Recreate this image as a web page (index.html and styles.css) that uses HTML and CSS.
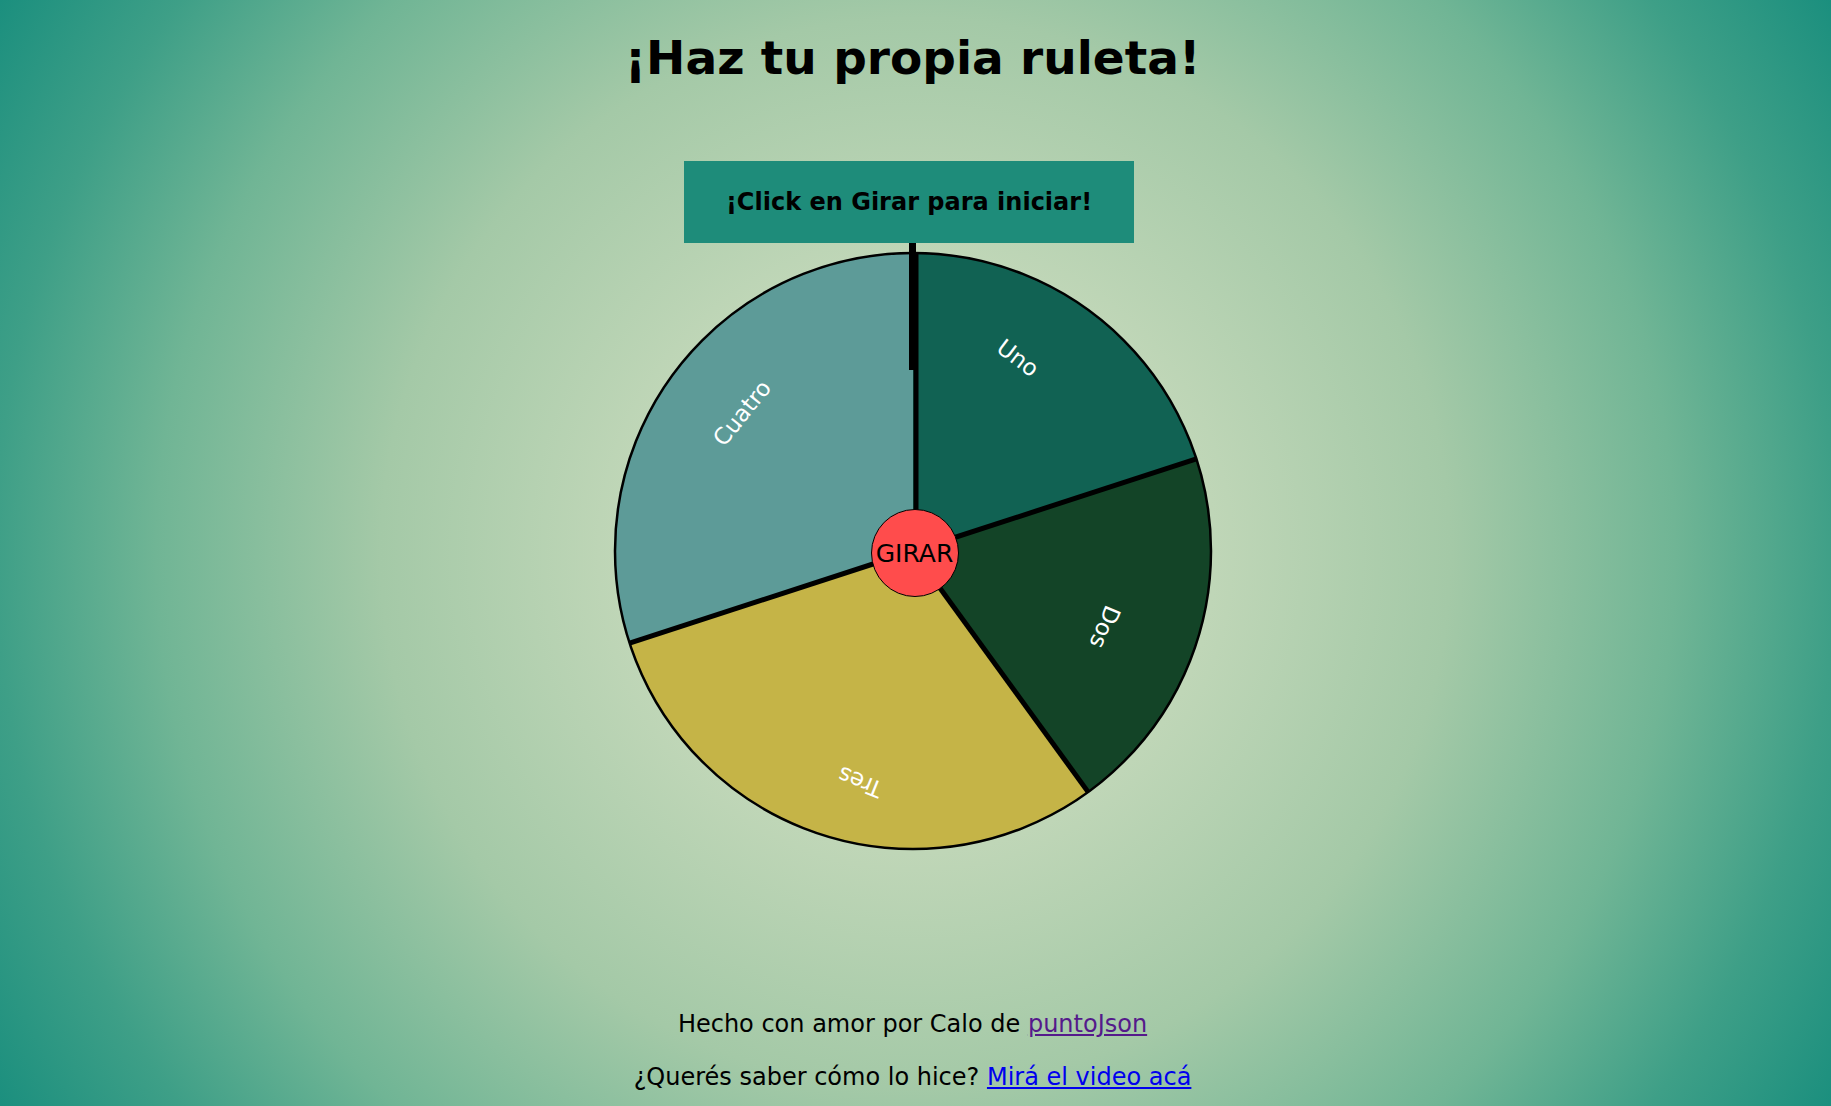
FILE: index.html
```html
<!DOCTYPE html>
<html lang="es">
<head>
<meta charset="utf-8">
<title>¡Haz tu propia ruleta!</title>
<link rel="stylesheet" href="styles.css">
</head>
<body>
<main class="page">
  <h1 class="title">¡Haz tu propia ruleta!</h1>
  <div class="banner">¡Click en Girar para iniciar!</div>
  <div class="wheel">
    <svg class="wheel-svg" width="600" height="600" viewBox="-300 -300 600 600" xmlns="http://www.w3.org/2000/svg">
      <path d="M0 0 L0 -298 A298 298 0 0 1 283.4 -92.1 Z" fill="#116253"/>
      <path d="M0 0 L283.4 -92.1 A298 298 0 0 1 175.2 241.1 Z" fill="#134427"/>
      <path d="M0 0 L175.2 241.1 A298 298 0 0 1 -283.4 92.1 Z" fill="#c5b447"/>
      <path d="M0 0 L-283.4 92.1 A298 298 0 0 1 0 -298 Z" fill="#5d9b98"/>
      <g stroke="#000" stroke-width="5">
        <line x1="3" y1="0" x2="3" y2="-298"/>
        <line x1="0" y1="0" x2="283.4" y2="-92.1"/>
        <line x1="0" y1="0" x2="175.2" y2="241.1"/>
        <line x1="0" y1="0" x2="-283.4" y2="92.1"/>
      </g>
      <circle cx="0" cy="0" r="298" fill="none" stroke="#000" stroke-width="2.5"/>
      <g class="labels">
        <text transform="translate(105 -193) rotate(37)">Uno</text>
        <text transform="translate(192 76) rotate(113)">Dos</text>
        <text transform="translate(-53 231) rotate(202)">Tres</text>
        <text transform="translate(-171 -138) rotate(309)">Cuatro</text>
      </g>
    </svg>
    <div class="pointer"></div>
    <button class="spin">GIRAR</button>
  </div>
  <footer class="footer">
    <p class="line">Hecho con amor por Calo de <a class="visited" href="#">puntoJson</a></p>
    <p class="line">¿Querés saber cómo lo hice? <a class="link" href="#">Mirá el video acá</a></p>
  </footer>
</main>
</body>
</html>
```
FILE: styles.css
```css
html, body {
  margin: 0;
  padding: 0;
}
body {
  min-height: 100vh;
  background: radial-gradient(circle farthest-corner at 50% 50%, #c6dabb 0%, #bfd6b7 28%, #a4c9a7 50%, #70b595 71%, #3e9f87 86%, #1b8f7e 100%);
  font-family: "DejaVu Sans", "Noto Sans", sans-serif;
  color: #000;
}
.page {
  display: flex;
  flex-direction: column;
  align-items: center;
  padding: 30px 6px 0 0;
  height: 1106px;
  box-sizing: border-box;
}
.title {
  margin: 0;
  font-size: 47px;
  line-height: 56px;
  font-weight: bold;
}
.banner {
  margin-top: 75px;
  margin-right: 7px;
  width: 450px;
  height: 82px;
  background: #1e8c7a;
  display: flex;
  align-items: center;
  justify-content: center;
  font-weight: bold;
  font-size: 24px;
}
.wheel {
  position: relative;
  margin-top: 8px;
  width: 600px;
  height: 600px;
}
.wheel-svg {
  display: block;
}
.labels text {
  fill: #fff;
  font-family: "DejaVu Sans", "Noto Sans", sans-serif;
  font-size: 23px;
  text-anchor: middle;
  dominant-baseline: central;
}
.pointer {
  position: absolute;
  left: 296px;
  top: -8px;
  width: 7px;
  height: 127px;
  background: #000;
}
.spin {
  position: absolute;
  left: 258px;
  top: 258px;
  width: 88px;
  height: 88px;
  border-radius: 50%;
  border: 1px solid #000;
  background: #ff4c4c;
  color: #000;
  padding: 0;
  font-family: "DejaVu Sans", "Noto Sans", sans-serif;
  font-size: 25px;
}
.footer {
  margin-top: 159px;
  display: flex;
  flex-direction: column;
  align-items: center;
  gap: 25px;
}
.line {
  margin: 0;
  font-size: 24px;
  line-height: 28px;
}
.visited {
  color: #551a8b;
}
.link {
  color: #0000ee;
}
```
